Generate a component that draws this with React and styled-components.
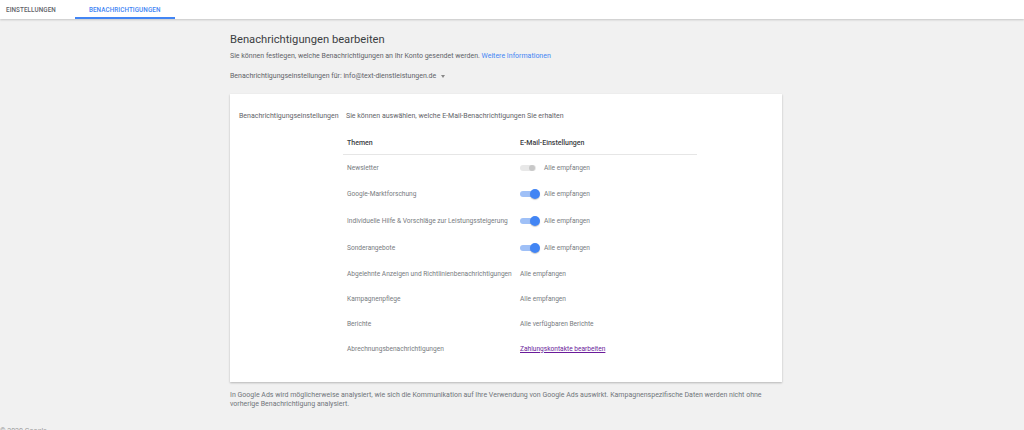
import React from 'react';
import styled, { createGlobalStyle } from 'styled-components';

const GlobalStyle = createGlobalStyle`
  html, body {
    margin: 0;
    padding: 0;
    background: #f1f1f1;
    font-family: Roboto, "Liberation Sans", Arial, sans-serif;
    color: #5f6368;
  }
`;

const Page = styled.div`
  width: 1024px;
  height: 430px;
  overflow: hidden;
  background: #f1f1f1;
`;

const TabBar = styled.div`
  height: 19px;
  background: #fff;
  display: flex;
  box-shadow: 0 1px 2px rgba(0, 0, 0, 0.18);
`;

const Tab = styled.div`
  height: 19px;
  box-sizing: border-box;
  padding: 2px ${p => (p.$active ? '14px' : '6px')} 0;
  margin-left: ${p => (p.$active ? '13px' : '0')};
  display: flex;
  align-items: center;
  font-size: 6.3px;
  font-weight: 500;
  letter-spacing: 0.1px;
  color: ${p => (p.$active ? '#4285f4' : '#5f6368')};
  border-bottom: 2px solid ${p => (p.$active ? '#4285f4' : 'transparent')};
`;

const Content = styled.div`
  margin-left: 230px;
  width: 552px;
  display: flex;
  flex-direction: column;
`;

const Title = styled.h1`
  margin: 14px 0 0;
  font-size: 11.2px;
  font-weight: 400;
  line-height: 14px;
  color: #3c4043;
`;

const Text = styled.p`
  margin: ${p => p.$margin || '0'};
  font-size: 7px;
  line-height: 9px;
  color: ${p => p.$color || '#5f6368'};
`;

const Link = styled.a`
  color: ${p => (p.$visited ? '#6a1b9a' : '#4285f4')};
  text-decoration: ${p => (p.$visited ? 'underline' : 'none')};
`;

const Caret = styled.span`
  display: inline-block;
  margin-left: 5px;
  width: 0;
  height: 0;
  border-left: 2.5px solid transparent;
  border-right: 2.5px solid transparent;
  border-top: 3px solid #888;
  vertical-align: middle;
`;

const Card = styled.div`
  margin-top: 13px;
  background: #fff;
  box-shadow: 0 1px 2px rgba(0, 0, 0, 0.25);
  display: grid;
  grid-template-columns: 107px 1fr;
  padding: 18px 0 21px 9px;
`;

const Label = styled.div`
  font-size: 7px;
  line-height: 9px;
  color: #5f6368;
  white-space: nowrap;
`;

const Table = styled.div`
  display: flex;
  flex-direction: column;
  margin: 11px 0 0 -3px;
  width: 354px;
`;

const Row = styled.div`
  display: grid;
  grid-template-columns: 173px 1fr;
  align-items: center;
  height: ${p => p.$h || 25}px;
  padding-left: 4px;
  white-space: nowrap;
  font-size: ${p => (p.$head ? '7px' : '6.6px')};
  color: ${p => (p.$head ? '#3c4043' : '#777b80')};
  font-weight: ${p => (p.$head ? 500 : 400)};
  border-bottom: ${p => (p.$head ? '1px solid #e6e6e6' : 'none')};
`;

const Setting = styled.div`
  display: flex;
  align-items: center;
  gap: 8px;
`;

const Track = styled.span`
  position: relative;
  width: 16px;
  height: 6px;
  border-radius: 3px;
  background: ${p => (p.$on ? '#9fc0f7' : '#e8e8e8')};
`;

const Thumb = styled.span`
  position: absolute;
  top: ${p => (p.$on ? '-2px' : '0')};
  right: ${p => (p.$on ? '-4px' : '1px')};
  width: ${p => (p.$on ? '10px' : '6px')};
  height: ${p => (p.$on ? '10px' : '6px')};
  border-radius: ${p => (p.$on ? '50%' : '3px')};
  background: ${p => (p.$on ? '#4285f4' : '#c8c8c8')};
  box-shadow: ${p => (p.$on ? '0 1px 1px rgba(0,0,0,0.2)' : 'none')};
`;

const Footer = styled.div`
  margin-top: 9px;
`;

const Copyright = styled.div`
  margin-top: 18px;
  font-size: 7px;
  color: #9a9a9a;
`;

const rows = [
  { topic: 'Newsletter', toggle: 'off', h: 26 },
  { topic: 'Google-Marktforschung', toggle: 'on', h: 26 },
  { topic: 'Individuelle Hilfe & Vorschläge zur Leistungssteigerung', toggle: 'on', h: 27 },
  { topic: 'Sonderangebote', toggle: 'on', h: 27 },
  { topic: 'Abgelehnte Anzeigen und Richtlinienbenachrichtigungen', value: 'Alle empfangen', h: 25 },
  { topic: 'Kampagnenpflege', value: 'Alle empfangen', h: 25 },
  { topic: 'Berichte', value: 'Alle verfügbaren Berichte', h: 25 },
  { topic: 'Abrechnungsbenachrichtigungen', link: 'Zahlungskontakte bearbeiten', h: 25 },
];

const App = () => {
  return (
    <Page>
      <GlobalStyle />
      <TabBar>
        <Tab>EINSTELLUNGEN</Tab>
        <Tab $active>BENACHRICHTIGUNGEN</Tab>
      </TabBar>
      <Content>
        <Title>Benachrichtigungen bearbeiten</Title>
        <Text $margin="5px 0 0">
          Sie können festlegen, welche Benachrichtigungen an Ihr Konto gesendet werden.{' '}
          <Link href="#">Weitere Informationen</Link>
        </Text>
        <Text $margin="11px 0 0">
          Benachrichtigungseinstellungen für: info@text-dienstleistungen.de
          <Caret />
        </Text>
        <Card>
          <Label>Benachrichtigungseinstellungen</Label>
          <div>
            <Label>Sie können auswählen, welche E-Mail-Benachrichtigungen Sie erhalten</Label>
            <Table>
              <Row $head $h={22}>
                <span>Themen</span>
                <span>E-Mail-Einstellungen</span>
              </Row>
              {rows.map(r => (
                <Row key={r.topic} $h={r.h}>
                  <span>{r.topic}</span>
                  <Setting>
                    {r.toggle && (
                      <Track $on={r.toggle === 'on'}>
                        <Thumb $on={r.toggle === 'on'} />
                      </Track>
                    )}
                    {r.toggle && <span>Alle empfangen</span>}
                    {r.value && <span>{r.value}</span>}
                    {r.link && (
                      <Link href="#" $visited>
                        {r.link}
                      </Link>
                    )}
                  </Setting>
                </Row>
              ))}
            </Table>
          </div>
        </Card>
        <Footer>
          <Text $color="#70757a">
            In Google Ads wird möglicherweise analysiert, wie sich die Kommunikation auf Ihre Verwendung von Google Ads auswirkt. Kampagnenspezifische Daten werden nicht ohne vorherige Benachrichtigung analysiert.
          </Text>
        </Footer>
      </Content>
      <Copyright>© 2020 Google</Copyright>
    </Page>
  );
};

export default App;
